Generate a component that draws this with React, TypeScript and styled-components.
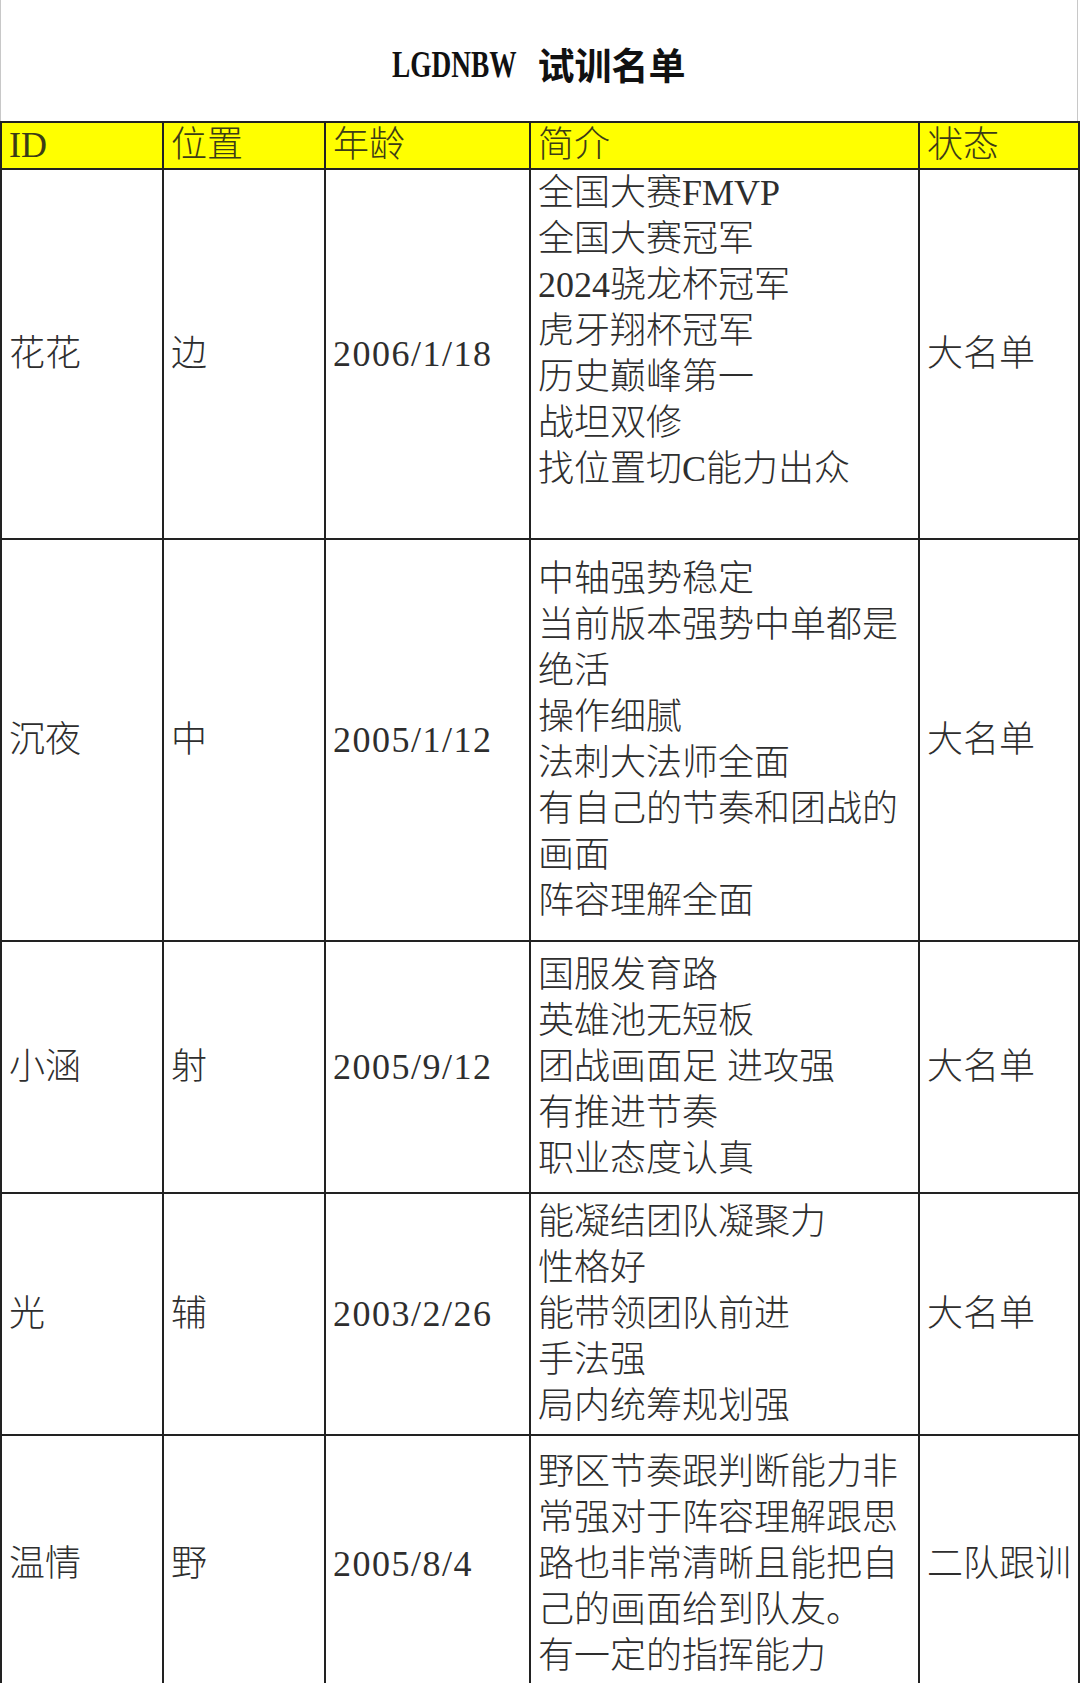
import styled, { createGlobalStyle } from "styled-components";

const GlobalStyle = createGlobalStyle`
  html, body {
    margin: 0;
    padding: 0;
    background: #fff;
  }
  body {
    font-family: "Liberation Serif", "Noto Sans CJK SC", serif;
    color: #2e2e2e;
  }
`;

const Sheet = styled.div`
  width: 1078px;
  background: #fff;
`;

const Title = styled.div`
  height: 121px;
  display: flex;
  align-items: center;
  justify-content: center;
  border-left: 1px solid #c8c8c8;
  border-right: 1px solid #c8c8c8;
  box-sizing: border-box;
  font-weight: bold;
  color: #111;
  padding-top: 6px;
`;

// the sheet's latin title face is a narrow one
const TitleLatin = styled.span`
  display: inline-block;
  font-size: 38px;
  transform: scaleX(0.72);
  transform-origin: left center;
  margin-right: -48px;
`;

const TitleHan = styled.span`
  font-size: 37px;
  margin-left: 20px;
`;

const Table = styled.table`
  width: 1078px;
  table-layout: fixed;
  border-collapse: collapse;
  font-size: 36px;
  font-weight: 300;
`;

const HeadRow = styled.tr`
  height: 47px;
  background: #ffff00;
`;

const HeadCell = styled.th`
  border: 2px solid #222;
  padding: 0 7px;
  text-align: left;
  font-weight: 300;
  color: #3c3c16;
  line-height: 43px;
  white-space: nowrap;
`;

const Row = styled.tr<{ $h: number }>`
  height: ${(p) => p.$h}px;
`;

const Cell = styled.td`
  border: 2px solid #222;
  padding: 0 7px;
  vertical-align: middle;
  line-height: 46px;
  white-space: nowrap;
  overflow: hidden;
`;

const DateCell = styled(Cell)`
  letter-spacing: 1.5px;
`;

const IntroCell = styled(Cell)`
  white-space: normal;
`;

const Line = styled.div`
  min-height: 46px;
  white-space: nowrap;
`;

const columns = [
  { label: "ID", w: 162 },
  { label: "位置", w: 162 },
  { label: "年龄", w: 205 },
  { label: "简介", w: 389 },
  { label: "状态", w: 160 },
];

const players = [
  {
    id: "花花",
    pos: "边",
    born: "2006/1/18",
    h: 364,
    intro: [
      "全国大赛FMVP",
      "全国大赛冠军",
      "2024骁龙杯冠军",
      "虎牙翔杯冠军",
      "历史巅峰第一",
      "战坦双修",
      "找位置切C能力出众",
      "",
    ],
    status: "大名单",
  },
  {
    id: "沉夜",
    pos: "中",
    born: "2005/1/12",
    h: 402,
    intro: [
      "中轴强势稳定",
      "当前版本强势中单都是",
      "绝活",
      "操作细腻",
      "法刺大法师全面",
      "有自己的节奏和团战的",
      "画面",
      "阵容理解全面",
    ],
    status: "大名单",
  },
  {
    id: "小涵",
    pos: "射",
    born: "2005/9/12",
    h: 252,
    intro: ["国服发育路", "英雄池无短板", "团战画面足 进攻强", "有推进节奏", "职业态度认真"],
    status: "大名单",
  },
  {
    id: "光",
    pos: "辅",
    born: "2003/2/26",
    h: 242,
    intro: ["能凝结团队凝聚力", "性格好", "能带领团队前进", "手法强", "局内统筹规划强"],
    status: "大名单",
  },
  {
    id: "温情",
    pos: "野",
    born: "2005/8/4",
    h: 258,
    intro: [
      "野区节奏跟判断能力非",
      "常强对于阵容理解跟思",
      "路也非常清晰且能把自",
      "己的画面给到队友。",
      "有一定的指挥能力",
    ],
    status: "二队跟训",
  },
];

export default function App() {
  return (
    <>
      <GlobalStyle />
      <Sheet>
        <Title>
          <TitleLatin>LGDNBW</TitleLatin>
          <TitleHan>试训名单</TitleHan>
        </Title>
        <Table>
          <colgroup>
            {columns.map((c) => (
              <col key={c.label} style={{ width: c.w }} />
            ))}
          </colgroup>
          <thead>
            <HeadRow>
              {columns.map((c) => (
                <HeadCell key={c.label}>{c.label}</HeadCell>
              ))}
            </HeadRow>
          </thead>
          <tbody>
            {players.map((p) => (
              <Row key={p.id} $h={p.h}>
                <Cell>{p.id}</Cell>
                <Cell>{p.pos}</Cell>
                <DateCell>{p.born}</DateCell>
                <IntroCell>
                  {p.intro.map((line, i) => (
                    <Line key={i}>{line || "\u00a0"}</Line>
                  ))}
                </IntroCell>
                <Cell>{p.status}</Cell>
              </Row>
            ))}
          </tbody>
        </Table>
      </Sheet>
    </>
  );
}
